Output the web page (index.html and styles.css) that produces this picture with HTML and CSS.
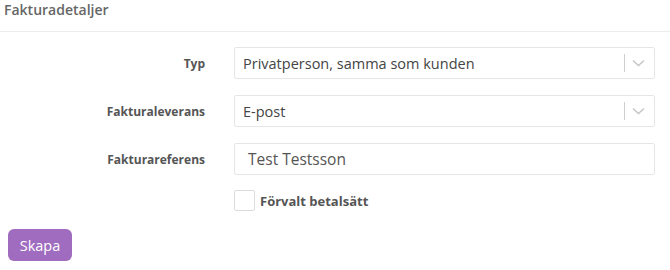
FILE: index.html
```html
<!DOCTYPE html>
<html>
<head>
<meta charset="utf-8">
<link rel="stylesheet" href="styles.css">
</head>
<body>
<div class="panel">
  <div class="panel-head">Fakturadetaljer</div>
  <div class="form">
    <div class="row">
      <label class="lbl">Typ</label>
      <div class="select">
        <span class="value">Privatperson, samma som kunden</span>
        <span class="sep"></span>
        <svg class="chev" width="13" height="8" viewBox="0 0 13 8"><path d="M1 1.5 L6.5 6.5 L12 1.5" fill="none" stroke="#c4c4c4" stroke-width="1.3"/></svg>
      </div>
    </div>
    <div class="row">
      <label class="lbl">Fakturaleverans</label>
      <div class="select">
        <span class="value">E-post</span>
        <span class="sep"></span>
        <svg class="chev" width="13" height="8" viewBox="0 0 13 8"><path d="M1 1.5 L6.5 6.5 L12 1.5" fill="none" stroke="#c4c4c4" stroke-width="1.3"/></svg>
      </div>
    </div>
    <div class="row">
      <label class="lbl">Fakturareferens</label>
      <div class="input">Test Testsson</div>
    </div>
    <div class="row check-row">
      <span></span>
      <div class="check">
        <span class="box"></span>
        <span class="check-lbl">Förvalt betalsätt</span>
      </div>
    </div>
  </div>
  <div class="actions">
    <button class="btn">Skapa</button>
  </div>
</div>
</body>
</html>
```
FILE: styles.css
```css
html, body {
  margin: 0;
  padding: 0;
  background: #fff;
  font-family: "Open Sans", "Noto Sans", sans-serif;
  color: #555;
}
.panel {
  width: 670px;
}
.panel-head {
  height: 31px;
  border-bottom: 1px solid #ececec;
  padding-left: 4px;
  font-size: 14px;
  font-weight: 600;
  color: #666;
  line-height: 20px;
}
.form {
  padding: 15px 15px 0 0;
  display: flex;
  flex-direction: column;
  gap: 16px;
}
.row {
  display: grid;
  grid-template-columns: 205px 1fr;
  column-gap: 29px;
  align-items: center;
}
.lbl {
  text-align: right;
  font-size: 12px;
  font-weight: 700;
  color: #555;
}
.select, .input {
  height: 30px;
  border: 1px solid #e6e6e6;
  border-radius: 2px;
  display: flex;
  align-items: center;
  box-sizing: content-box;
}
.select {
  padding-left: 8px;
  font-size: 14.5px;
  color: #444;
}
.value {
  flex: 1;
}
.sep {
  width: 1px;
  height: 18px;
  background: #cfcfcf;
}
.chev {
  margin: 0 9px 0 7px;
}
.input {
  padding-left: 13px;
  font-size: 15.5px;
  color: #555;
}
.check-row {
  margin-top: -1px;
}
.check {
  display: flex;
  align-items: center;
  gap: 5px;
}
.box {
  width: 19px;
  height: 19px;
  border: 1px solid #dcdcdc;
  border-radius: 2px;
  background: #fff;
}
.check-lbl {
  font-size: 13px;
  font-weight: 700;
  color: #555;
}
.actions {
  padding: 18px 0 0 8px;
}
.btn {
  width: 64px;
  height: 32px;
  border: none;
  border-radius: 6px;
  background: #a06cc0;
  color: #fff;
  font-family: "Open Sans", "Noto Sans", sans-serif;
  font-size: 14.5px;
  padding: 0;
}
```
